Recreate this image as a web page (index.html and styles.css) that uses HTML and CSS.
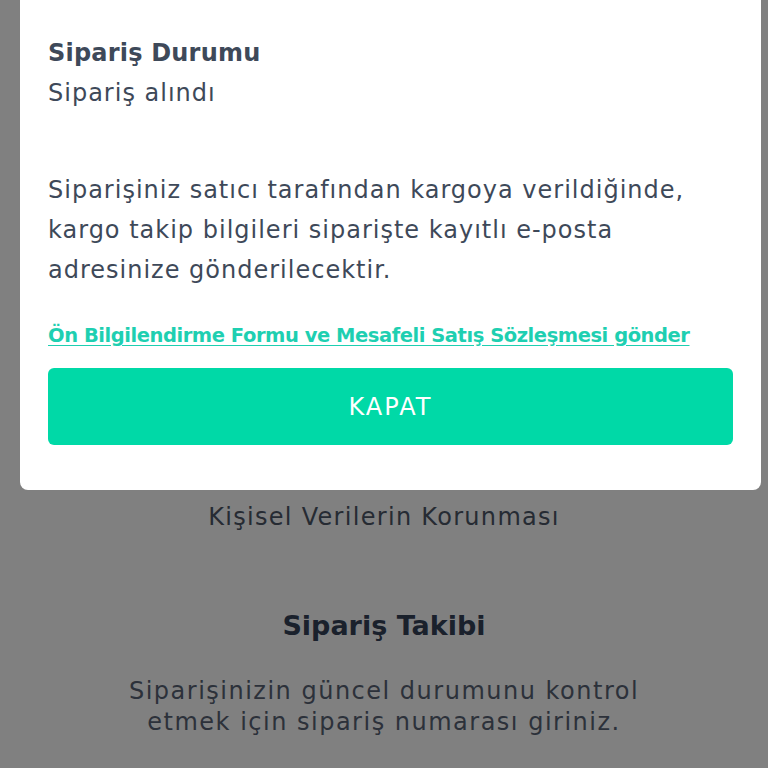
FILE: index.html
```html
<!DOCTYPE html>
<html lang="tr">
<head>
<meta charset="utf-8">
<title>Sipariş Durumu</title>
<link rel="stylesheet" href="styles.css">
</head>
<body>
<main class="page">
  <p class="page-link">Kişisel Verilerin Korunması</p>
  <h2 class="page-title">Sipariş Takibi</h2>
  <p class="page-text">Siparişinizin güncel durumunu kontrol<br>etmek için sipariş numarası giriniz.</p>
</main>
<div class="modal">
  <h1 class="modal-title">Sipariş Durumu</h1>
  <p class="modal-status">Sipariş alındı</p>
  <p class="modal-text">Siparişiniz satıcı tarafından kargoya verildiğinde, kargo takip bilgileri siparişte kayıtlı e-posta adresinize gönderilecektir.</p>
  <a class="modal-link" href="#">Ön Bilgilendirme Formu ve Mesafeli Satış Sözleşmesi gönder</a>
  <button class="modal-button" type="button">KAPAT</button>
</div>
</body>
</html>
```
FILE: styles.css
```css
html, body {
  margin: 0;
  padding: 0;
}
body {
  background: #808080;
  font-family: "DejaVu Sans", sans-serif;
  width: 768px;
  height: 768px;
  overflow: hidden;
  position: relative;
}
.page {
  display: flex;
  flex-direction: column;
  align-items: center;
  padding-top: 502px;
  text-align: center;
}
.page-link {
  margin: 0;
  font-size: 24px;
  line-height: 30px;
  letter-spacing: 1.3px;
  color: #262b33;
}
.page-title {
  margin: 77px 0 0;
  font-size: 27px;
  line-height: 34px;
  font-weight: 600;
  color: #1a212c;
}
.page-text {
  margin: 33px 0 0;
  font-size: 24px;
  line-height: 31px;
  letter-spacing: 1.5px;
  color: #2c313a;
}
.modal {
  position: absolute;
  top: 0;
  left: 20px;
  width: 741px;
  box-sizing: border-box;
  background: #fff;
  border-radius: 0 0 8px 8px;
  padding: 33px 28px 45px;
  display: flex;
  flex-direction: column;
  color: #3e4959;
}
.modal-title {
  margin: 0;
  font-size: 24px;
  line-height: 40px;
  font-weight: 700;
  letter-spacing: 0.2px;
}
.modal-status {
  margin: 0;
  font-size: 24px;
  line-height: 40px;
  letter-spacing: 1px;
}
.modal-text {
  margin: 57px 0 0;
  font-size: 24px;
  line-height: 40px;
  letter-spacing: 1px;
}
.modal-link {
  margin-top: 32px;
  font-size: 19.5px;
  line-height: 28px;
  font-weight: 600;
  letter-spacing: -0.45px;
  color: #1ecfb1;
  text-decoration: underline;
  text-underline-offset: 3px;
}
.modal-button {
  margin-top: 18px;
  height: 77px;
  border: 0;
  border-radius: 6px;
  background: #00d9a7;
  color: #fff;
  font-family: inherit;
  font-size: 24px;
  letter-spacing: 2px;
  font-weight: 500;
}
```
